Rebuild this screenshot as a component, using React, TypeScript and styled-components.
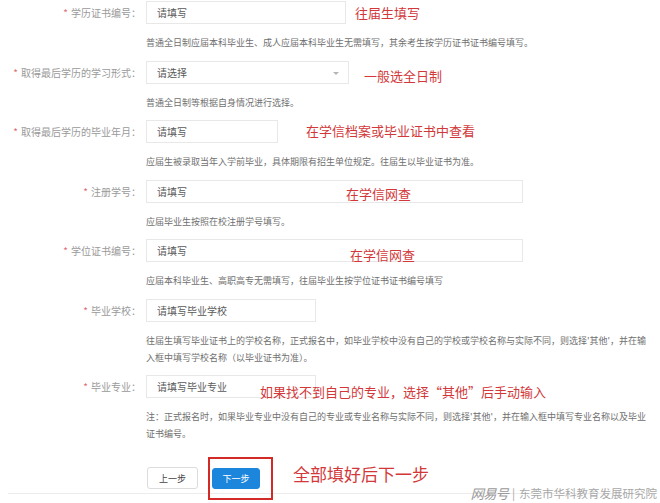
import React from 'react'
import styled, { createGlobalStyle } from 'styled-components'

const GlobalStyle = createGlobalStyle`
  body {
    margin: 0;
    background: #fff;
    font-family: "Noto Sans CJK SC", "Noto Sans", sans-serif;
  }
`

const Page = styled.div`
  position: relative;
  width: 660px;
  height: 503px;
  padding-top: 1px;
  box-sizing: border-box;
  overflow: hidden;
`

const Row = styled.div`
  position: relative;
  display: flex;
  align-items: flex-start;
  margin-bottom: 9.5px;
`

const Label = styled.div`
  width: 141px;
  flex-shrink: 0;
  text-align: right;
  font-size: 10px;
  line-height: 23px;
  color: #9a9a9a;
  white-space: nowrap;
`

const Star = styled.span`
  color: #e06a78;
  margin-right: 3px;
`

const Field = styled.div`
  display: flex;
  flex-direction: column;
  margin-left: 5px;
`

const Box = styled.div<{ $w: number }>`
  position: relative;
  width: ${(p) => p.$w}px;
  height: 23px;
  box-sizing: border-box;
  border: 1px solid #e8e8e8;
  padding: 0 10px;
  font-size: 10px;
  line-height: 21px;
  color: #5a5a5a;
`

const Caret = styled.span`
  position: absolute;
  right: 9px;
  top: 10px;
  border-left: 3px solid transparent;
  border-right: 3px solid transparent;
  border-top: 3px solid #b5b5b5;
`

const Help = styled.div`
  margin-top: 10px;
  font-size: 9px;
  line-height: 17px;
  color: #707070;
  white-space: nowrap;
`

const Note = styled.div<{ $x: number; $y: number; $size?: number }>`
  position: absolute;
  left: ${(p) => p.$x}px;
  top: ${(p) => p.$y}px;
  font-size: ${(p) => p.$size ?? 13}px;
  line-height: 18px;
  color: #d2383a;
  white-space: nowrap;
`

const ButtonRow = styled.div`
  position: relative;
  display: flex;
  align-items: center;
  gap: 14px;
  margin: 25px 10px 0 8px;
  padding: 0 0 4px 139px;
  border-bottom: 1px solid #ececec;
`

const Button = styled.div<{ $primary?: boolean }>`
  position: relative;
  box-sizing: border-box;
  width: ${(p) => (p.$primary ? 48 : 51)}px;
  height: ${(p) => (p.$primary ? 21 : 22)}px;
  border-radius: 3px;
  border: 1px solid ${(p) => (p.$primary ? '#1c86dc' : '#dcdcdc')};
  background: ${(p) => (p.$primary ? '#1c86dc' : '#fff')};
  color: ${(p) => (p.$primary ? '#fff' : '#444')};
  font-size: 9px;
  display: flex;
  align-items: center;
  justify-content: center;
`

const Highlight = styled.span`
  position: absolute;
  left: -5px;
  right: -14px;
  top: -12px;
  bottom: -12px;
  border: 2px solid #d32a26;
`

const Watermark = styled.div`
  position: absolute;
  right: 3px;
  top: 484px;
  display: flex;
  align-items: center;
  gap: 4px;
  color: #a8a8a8;
  font-size: 11.5px;
  line-height: 18px;
  white-space: nowrap;
`

const Brand = styled.span`
  font-size: 13.5px;
  font-style: italic;
  letter-spacing: -1px;
  color: #9a9a9a;
`

type FieldRow = {
  label: string
  width: number
  text: string
  select?: boolean
  help: string[]
  note?: { text: string; x: number; y: number }
}

const rows: FieldRow[] = [
  {
    label: '学历证书编号：',
    width: 200,
    text: '请填写',
    help: ['普通全日制应届本科毕业生、成人应届本科毕业生无需填写，其余考生按学历证书证书编号填写。'],
    note: { text: '往届生填写', x: 355, y: 3 },
  },
  {
    label: '取得最后学历的学习形式：',
    width: 203,
    text: '请选择',
    select: true,
    help: ['普通全日制等根据自身情况进行选择。'],
    note: { text: '一般选全日制', x: 364, y: 6 },
  },
  {
    label: '取得最后学历的毕业年月：',
    width: 132,
    text: '请填写',
    help: ['应届生被录取当年入学前毕业，具体期限有招生单位规定。往届生以毕业证书为准。'],
    note: { text: '在学信档案或毕业证书中查看', x: 306, y: 2 },
  },
  {
    label: '注册学号：',
    width: 377,
    text: '请填写',
    help: ['应届毕业生按照在校注册学号填写。'],
    note: { text: '在学信网查', x: 346, y: 5 },
  },
  {
    label: '学位证书编号：',
    width: 377,
    text: '请填写',
    help: ['应届本科毕业生、高职高专无需填写，往届毕业生按学位证书证书编号填写'],
    note: { text: '在学信网查', x: 350, y: 7 },
  },
  {
    label: '毕业学校：',
    width: 170,
    text: '请填写毕业学校',
    help: [
      "往届生填写毕业证书上的学校名称，正式报名中，如毕业学校中没有自己的学校或学校名称与实际不同，则选择'其他'，并在输",
      '入框中填写学校名称（以毕业证书为准）。',
    ],
  },
  {
    label: '毕业专业：',
    width: 170,
    text: '请填写毕业专业',
    help: [
      "注：正式报名时，如果毕业专业中没有自己的专业或专业名称与实际不同，则选择'其他'，并在输入框中填写专业名称以及毕业",
      '证书编号。',
    ],
    note: { text: '如果找不到自己的专业，选择“其他”后手动输入', x: 260, y: 8 },
  },
]

export default function App() {
  return (
    <Page>
      <GlobalStyle />
      {rows.map((r) => (
        <Row key={r.label}>
          <Label>
            <Star>*</Star>
            {r.label}
          </Label>
          <Field>
            <Box $w={r.width}>
              {r.text}
              {r.select && <Caret />}
            </Box>
            <Help>
              {r.help.map((line, i) => (
                <div key={i}>{line}</div>
              ))}
            </Help>
          </Field>
          {r.note && (
            <Note $x={r.note.x} $y={r.note.y}>
              {r.note.text}
            </Note>
          )}
        </Row>
      ))}
      <ButtonRow>
        <Button>上一步</Button>
        <Button $primary>
          下一步
          <Highlight />
        </Button>
        <Note $x={285} $y={-2} $size={17}>
          全部填好后下一步
        </Note>
      </ButtonRow>
      <Watermark>
        <Brand>网易号</Brand>
        <span>|</span>
        <span>东莞市华科教育发展研究院</span>
      </Watermark>
    </Page>
  )
}
